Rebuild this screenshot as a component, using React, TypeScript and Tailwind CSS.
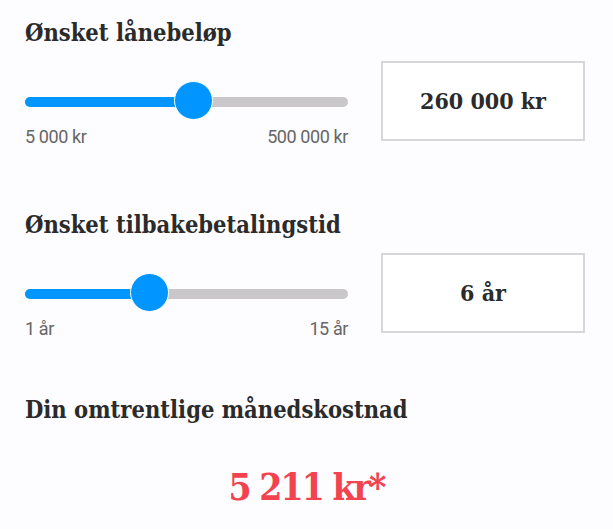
import { useState } from "react";

type SliderFieldProps = {
  title: string;
  min: number;
  max: number;
  value: number;
  format: (n: number) => string;
};

const slab = "font-['DejaVu_Serif',serif] font-bold [font-stretch:condensed]";

function SliderField({ title, min, max, value, format }: SliderFieldProps) {
  const fraction = (value - min) / (max - min);
  // thumb left edge inside the 323px track (39px thumb)
  const thumbLeft = 6 + fraction * 278;

  return (
    <section>
      <h2 className={`${slab} text-[23.5px] leading-[28px] text-[#2b2b2b]`}>{title}</h2>
      <div className="mt-[14px] flex gap-[33px]">
        <div className="w-[323px] pt-[20px]">
          <div className="relative h-[39px]">
            <div className="absolute left-0 right-0 top-[16px] h-[10px] rounded-full bg-[#c9c7ca]" />
            <div
              className="absolute left-0 top-[16px] h-[10px] rounded-full bg-[#0095ff]"
              style={{ width: thumbLeft + 20 }}
            />
            <div
              className="absolute top-0 h-[39px] w-[39px] rounded-full border border-white bg-[#0095ff]"
              style={{ left: thumbLeft }}
            />
          </div>
          <div className="mt-[6px] flex justify-between font-['Roboto',sans-serif] text-[18px] leading-[22px] tracking-[-0.4px] text-[#666]">
            <span>{format(min)}</span>
            <span>{format(max)}</span>
          </div>
        </div>
        <div className="flex h-[80px] w-[204px] items-center justify-center border-2 border-[#d6d5d8] bg-white">
          <span className={`${slab} text-[23px] text-[#2b2b2b]`}>{format(value)}</span>
        </div>
      </div>
    </section>
  );
}

const kr = (n: number) => `${n.toLocaleString("nb-NO").replace(/\s/g, " ")} kr`;
const years = (n: number) => `${n} år`;

export default function App() {
  const [amount] = useState(260000);
  const [term] = useState(6);

  return (
    <div className="min-h-[529px] w-[613px] bg-[#fdfcfe] px-[25px] pt-[19px]">
      <SliderField title="Ønsket lånebeløp" min={5000} max={500000} value={amount} format={kr} />
      <div className="mt-[63px]">
        <SliderField title="Ønsket tilbakebetalingstid" min={1} max={15} value={term} format={years} />
      </div>
      <section className="mt-[56px]">
        <h2 className={`${slab} text-[23.5px] leading-[28px] text-[#2b2b2b]`}>Din omtrentlige månedskostnad</h2>
        <p className={`${slab} mt-[41px] text-center text-[37px] leading-[44px] tracking-[-2px] text-[#f2434f]`}>
          5 211 kr*
        </p>
      </section>
    </div>
  );
}
